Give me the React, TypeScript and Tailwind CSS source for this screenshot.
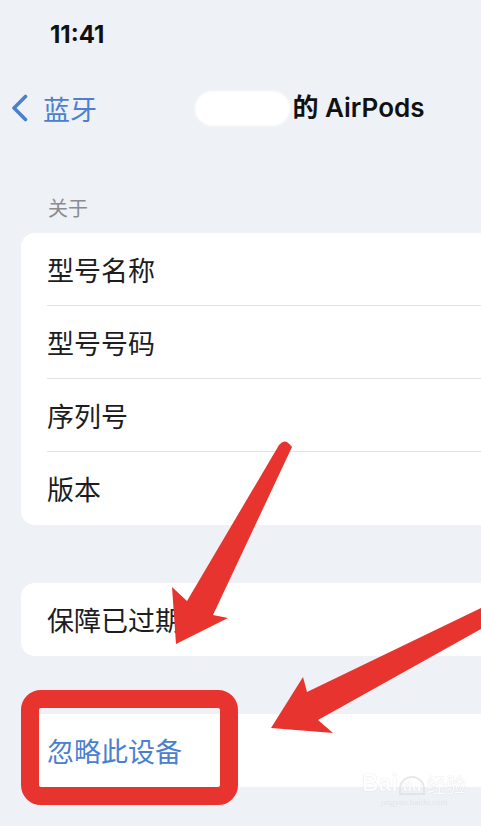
import React from 'react';

const rows = ['型号名称', '型号号码', '序列号', '版本'];

function Row({ label, last, blue }: { label: string; last?: boolean; blue?: boolean }) {
  return (
    <div className="pl-[26px]">
      <div
        className={`h-[73px] pt-[4px] flex items-center text-[27px] leading-none ${
          last ? '' : 'border-b border-[#e2e3e7]'
        } ${blue ? 'text-[#4b80cf]' : 'text-[#1d1d1f]'}`}
      >
        {label}
      </div>
    </div>
  );
}

export default function App() {
  return (
    <div className="relative w-[481px] h-[826px] overflow-hidden bg-[#eef1f5] font-['Inter','Noto_Sans_CJK_SC',sans-serif]">
      <div className="w-[616px]">
        {/* status bar */}
        <div className="h-[70px] pl-[50px] pt-[21px]">
          <span className="text-[24px] leading-[28px] font-bold text-[#111]">11:41</span>
        </div>

        {/* nav bar */}
        <div className="h-[76px] grid grid-cols-[1fr_auto_1fr] items-center">
          <div className="flex items-center gap-[15px] pl-[10px] text-[#4b80cf]">
            <svg width="18" height="28" viewBox="0 0 18 28" fill="none">
              <path d="M15.5 2.5 L4 14 L15.5 25.5" stroke="#4b80cf" strokeWidth="3.6" strokeLinecap="round" strokeLinejoin="round" />
            </svg>
            <span className="text-[27px] leading-none font-['Noto_Sans_CJK_SC',sans-serif]">蓝牙</span>
          </div>
          <div className="flex items-center gap-[2px] pl-[4px]">
            <div className="w-[95px] h-[35px] rounded-full bg-white blur-[1px]" />
            <span className="text-[26px] leading-none font-semibold text-[#111]">的 AirPods</span>
          </div>
          <div />
        </div>

        {/* section header */}
        <div className="h-[87px] pl-[48px] pb-[12px] flex items-end">
          <span className="text-[20px] leading-[24px] text-[#8b8b90]">关于</span>
        </div>

        <div className="mx-[21px] rounded-[14px] bg-white">
          {rows.map((r, i) => (
            <Row key={r} label={r} last={i === rows.length - 1} />
          ))}
        </div>

        <div className="mt-[58px] mx-[21px] rounded-[14px] bg-white">
          <Row label="保障已过期" last />
        </div>

        <div className="mt-[58px] mx-[21px] rounded-[14px] bg-white">
          <Row label="忽略此设备" last blue />
        </div>
      </div>

      {/* red annotation box */}
      <div className="absolute left-[21px] top-[690px] w-[217px] h-[115px] border-[18px] border-[#e8342e] rounded-[20px]" />

      {/* red arrows */}
      <svg className="absolute inset-0 pointer-events-none" width="481" height="826" viewBox="0 0 481 826">
        <path
          d="M279 445 Q285 437 292 447 L213 615 L228 618 L176 644 L172 587 L187 601 Z"
          fill="#e8342e"
        />
        <path d="M481 608 L307 692 L303 677 L271 728 L333 733 L318 720 L481 629 Z" fill="#e8342e" />
      </svg>

      {/* watermark */}
      <div className="absolute left-[362px] top-[772px] flex flex-col items-center opacity-80">
        <div className="flex items-end gap-[1px] text-white [text-shadow:0_0_1px_#b9bfc8]">
          <span className="text-[23px] leading-none font-bold font-['Liberation_Sans',sans-serif]">Bai</span>
          <span className="text-[15px] leading-none font-bold font-['Liberation_Sans',sans-serif] px-[2px] border-2 border-[#dfe3e8] rounded-t-full">du</span>
          <span className="text-[20px] leading-none font-['Noto_Sans_CJK_SC',sans-serif]">经验</span>
        </div>
        <span className="text-[9px] leading-[14px] text-[#dde1e6] font-['Liberation_Serif',serif]">jingyan.baidu.com</span>
      </div>
    </div>
  );
}
